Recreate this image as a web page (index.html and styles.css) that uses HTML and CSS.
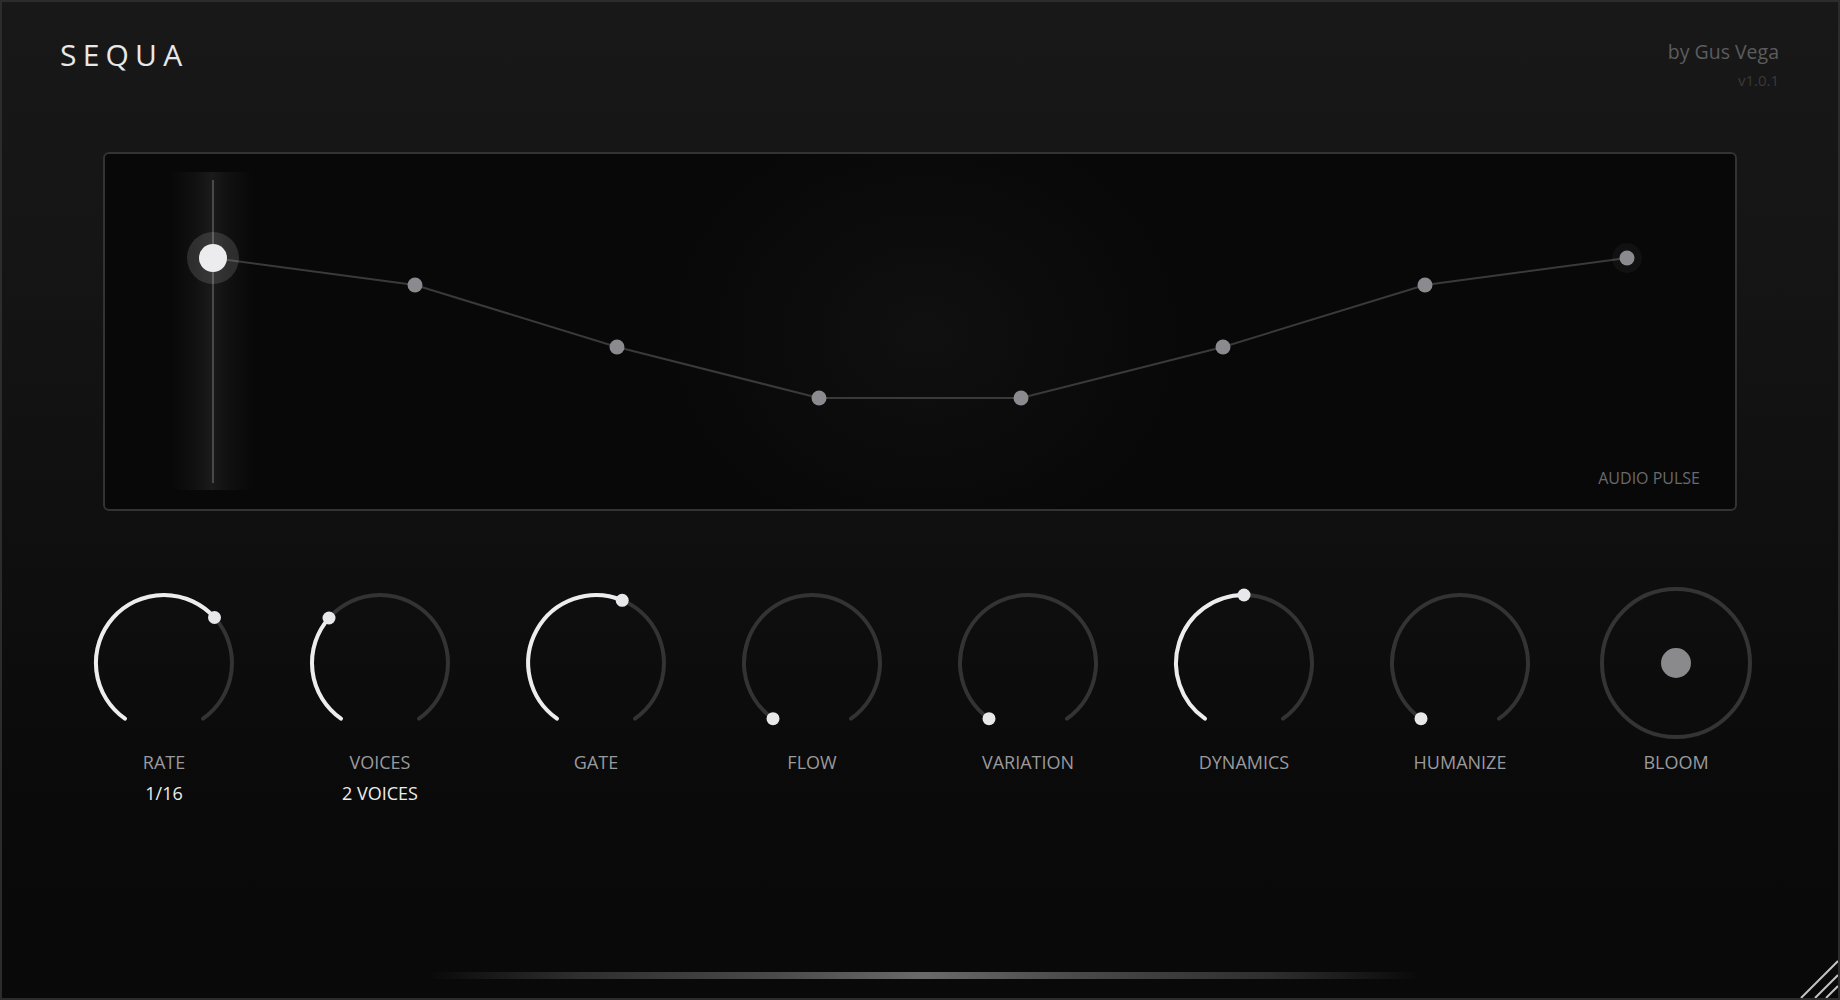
FILE: index.html
```html
<!DOCTYPE html>
<html lang="en">
<head>
<meta charset="utf-8">
<title>SEQUA</title>
<link rel="stylesheet" href="styles.css">
</head>
<body>
<div class="app">
  <header class="header">
    <div class="brand">SEQUA</div>
    <div class="credit">
      <div class="author">by Gus Vega</div>
      <div class="version">v1.0.1</div>
    </div>
  </header>

  <section class="viz">
    <svg class="viz-canvas" width="1630" height="355" viewBox="0 0 1630 355">
      <defs>
        <linearGradient id="colGrad" x1="0" y1="0" x2="1" y2="0">
          <stop offset="0" stop-color="#ffffff" stop-opacity="0"/>
          <stop offset="0.3" stop-color="#ffffff" stop-opacity="0.035"/>
          <stop offset="0.5" stop-color="#ffffff" stop-opacity="0.075"/>
          <stop offset="0.7" stop-color="#ffffff" stop-opacity="0.035"/>
          <stop offset="1" stop-color="#ffffff" stop-opacity="0"/>
        </linearGradient>
      </defs>
      <rect x="65" y="18" width="83" height="318" fill="url(#colGrad)"/>
      <line x1="108" y1="26" x2="108" y2="329" stroke="#5a5a5a" stroke-width="1.5"/>
      <polyline points="108,104 310,131 512,193 714,244 916,244 1118,193 1320,131 1522,104" fill="none" stroke="#3a3a3a" stroke-width="2"/>
      <circle cx="108" cy="104" r="26" fill="#ffffff" fill-opacity="0.13"/>
      <circle cx="1522" cy="104" r="15" fill="#ffffff" fill-opacity="0.04"/>
      <circle cx="310" cy="131" r="7.5" fill="#8b8b8f"/>
      <circle cx="512" cy="193" r="7.5" fill="#8b8b8f"/>
      <circle cx="714" cy="244" r="7.5" fill="#8b8b8f"/>
      <circle cx="916" cy="244" r="7.5" fill="#8b8b8f"/>
      <circle cx="1118" cy="193" r="7.5" fill="#8b8b8f"/>
      <circle cx="1320" cy="131" r="7.5" fill="#8b8b8f"/>
      <circle cx="1522" cy="104" r="7.5" fill="#8b8b8f"/>
      <circle cx="108" cy="104" r="14" fill="#ececee"/>
    </svg>
    <div class="viz-label">AUDIO PULSE</div>
  </section>

  <section class="knobs">
    <div class="knob">
      <svg class="dial" width="160" height="160" viewBox="0 0 160 160">
        <path d="M41 135.7 A68 68 0 1 1 119 135.7" class="track"/>
        <path d="M41 135.7 A68 68 0 1 1 130.5 34.5" class="value"/>
        <circle cx="130.5" cy="34.5" r="6.5" class="dot"/>
      </svg>
      <div class="knob-label">RATE</div>
      <div class="knob-value">1/16</div>
    </div>
    <div class="knob">
      <svg class="dial" width="160" height="160" viewBox="0 0 160 160">
        <path d="M41 135.7 A68 68 0 1 1 119 135.7" class="track"/>
        <path d="M41 135.7 A68 68 0 0 1 29 35" class="value"/>
        <circle cx="29" cy="35" r="6.5" class="dot"/>
      </svg>
      <div class="knob-label">VOICES</div>
      <div class="knob-value">2 VOICES</div>
    </div>
    <div class="knob">
      <svg class="dial" width="160" height="160" viewBox="0 0 160 160">
        <path d="M41 135.7 A68 68 0 1 1 119 135.7" class="track"/>
        <path d="M41 135.7 A68 68 0 0 1 106.2 17.3" class="value"/>
        <circle cx="106.2" cy="17.3" r="6.5" class="dot"/>
      </svg>
      <div class="knob-label">GATE</div>
    </div>
    <div class="knob">
      <svg class="dial" width="160" height="160" viewBox="0 0 160 160">
        <path d="M41 135.7 A68 68 0 1 1 119 135.7" class="track"/>
        <circle cx="41" cy="135.7" r="6.5" class="dot"/>
      </svg>
      <div class="knob-label">FLOW</div>
    </div>
    <div class="knob">
      <svg class="dial" width="160" height="160" viewBox="0 0 160 160">
        <path d="M41 135.7 A68 68 0 1 1 119 135.7" class="track"/>
        <circle cx="41" cy="135.7" r="6.5" class="dot"/>
      </svg>
      <div class="knob-label">VARIATION</div>
    </div>
    <div class="knob">
      <svg class="dial" width="160" height="160" viewBox="0 0 160 160">
        <path d="M41 135.7 A68 68 0 1 1 119 135.7" class="track"/>
        <path d="M41 135.7 A68 68 0 0 1 80 12" class="value"/>
        <circle cx="80" cy="12" r="6.5" class="dot"/>
      </svg>
      <div class="knob-label">DYNAMICS</div>
    </div>
    <div class="knob">
      <svg class="dial" width="160" height="160" viewBox="0 0 160 160">
        <path d="M41 135.7 A68 68 0 1 1 119 135.7" class="track"/>
        <circle cx="41" cy="135.7" r="6.5" class="dot"/>
      </svg>
      <div class="knob-label">HUMANIZE</div>
    </div>
    <div class="knob">
      <svg class="dial" width="160" height="160" viewBox="0 0 160 160">
        <circle cx="80" cy="80" r="74" class="ring"/>
        <circle cx="80" cy="80" r="15" class="core"/>
      </svg>
      <div class="knob-label">BLOOM</div>
    </div>
  </section>

  <footer class="footer">
    <div class="pulse-bar"></div>
  </footer>

  <svg class="grip" width="40" height="40" viewBox="0 0 40 40">
    <line x1="3" y1="40" x2="40" y2="3" />
    <line x1="17" y1="40" x2="40" y2="17" />
    <line x1="28" y1="40" x2="40" y2="28" />
  </svg>
</div>
</body>
</html>
```

FILE: styles.css
```css
html, body {
  margin: 0;
  padding: 0;
  background: #0b0b0b;
}

.app {
  position: relative;
  width: 1840px;
  height: 1000px;
  box-sizing: border-box;
  border: 2px solid #2c2c2c;
  display: flex;
  flex-direction: column;
  overflow: hidden;
  font-family: "Open Sans", "Noto Sans", "Liberation Sans", sans-serif;
  background: linear-gradient(180deg, #181818 0%, #151515 25%, #0f0f0f 55%, #0a0a0a 80%, #090909 100%);
}

.header {
  height: 150px;
  box-sizing: border-box;
  padding: 35px 59px 0 58px;
  display: flex;
  justify-content: space-between;
  align-items: flex-start;
}

.brand {
  font-size: 30px;
  line-height: 36px;
  letter-spacing: 6.2px;
  color: #e8e8ea;
}

.credit {
  margin-top: 3px;
  text-align: right;
}

.author {
  font-size: 19.5px;
  line-height: 24px;
  color: #5c5c5e;
}

.version {
  margin-top: 7px;
  font-size: 15px;
  line-height: 18px;
  color: #3a3a3a;
}

.viz {
  position: relative;
  margin: 0 101px;
  height: 359px;
  box-sizing: border-box;
  border: 2px solid #333333;
  border-radius: 6px;
  background: radial-gradient(ellipse 260px 220px at 820px 180px, #101010 0%, #0b0b0b 60%, #080808 100%), #080808;
  overflow: hidden;
}

.viz-canvas {
  display: block;
}

.viz-label {
  position: absolute;
  right: 35px;
  bottom: 21px;
  font-size: 16px;
  line-height: 20px;
  color: #6a6a6c;
}

.knobs {
  margin-top: 72px;
  padding: 0 54px;
  display: flex;
}

.knob {
  flex: 1;
  display: flex;
  flex-direction: column;
  align-items: center;
}

.dial {
  display: block;
}

.track {
  fill: none;
  stroke: #333333;
  stroke-width: 4;
  stroke-linecap: round;
}

.value {
  fill: none;
  stroke: #ededef;
  stroke-width: 4;
  stroke-linecap: round;
}

.dot {
  fill: #e8e8ea;
}

.ring {
  fill: none;
  stroke: #343434;
  stroke-width: 4;
}

.core {
  fill: #8a8a8c;
}

.knob-label {
  margin-top: 8px;
  font-size: 18px;
  line-height: 22px;
  color: #9a9a9e;
}

.knob-value {
  margin-top: 9px;
  font-size: 18px;
  line-height: 22px;
  color: #ececec;
}

.footer {
  margin-top: auto;
  padding-bottom: 19px;
  display: flex;
  justify-content: center;
}

.pulse-bar {
  width: 990px;
  height: 7px;
  border-radius: 3px;
  margin-left: 8px;
  background: linear-gradient(90deg, rgba(80,80,80,0) 0%, #2e2e2e 15%, #4a4a4a 35%, #6a6a6a 50%, #4a4a4a 65%, #2e2e2e 85%, rgba(80,80,80,0) 100%);
}

.grip {
  position: absolute;
  right: 0;
  bottom: 0;
}

.grip line {
  stroke: #c4c4c4;
  stroke-width: 2;
}
```
